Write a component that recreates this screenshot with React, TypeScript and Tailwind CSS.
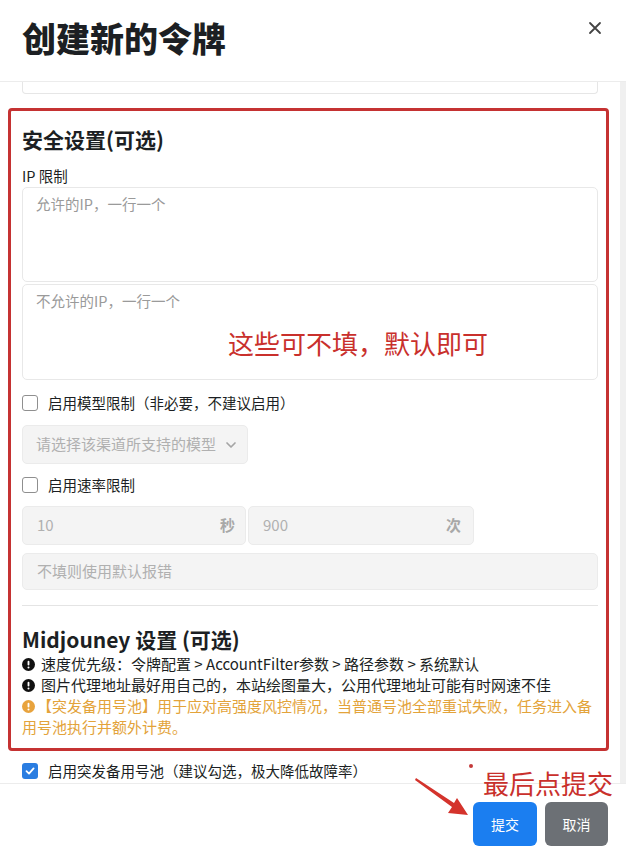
import React from 'react'

function Box({checked}: {checked?: boolean}) {
    return checked ? (
        <span className="w-[16px] h-[16px] rounded-[3px] bg-[#2a7de1] flex items-center justify-center">
            <svg width="12" height="12" viewBox="0 0 12 12"><path d="M2.5 6.2 L5 8.6 L9.6 3.4" stroke="#fff" strokeWidth="1.8" fill="none" strokeLinecap="round" strokeLinejoin="round"/></svg>
        </span>
    ) : (
        <span className="w-[16px] h-[16px] rounded-[3px] border border-[#8f8f8f] bg-white" />
    )
}

function Info({color}: {color: string}) {
    return (
        <svg width="13" height="13" viewBox="0 0 14 14" className="shrink-0 mt-[5px]">
            <circle cx="7" cy="7" r="7" fill={color} />
            <rect x="6" y="3" width="2" height="5" rx="1" fill="#fff" />
            <circle cx="7" cy="10.3" r="1.1" fill="#fff" />
        </svg>
    )
}

export default function App() {
    return (
        <div className="relative w-[626px] h-[859px] bg-white overflow-hidden text-[#1c1f23] font-['Microsoft_YaHei','Noto_Sans_CJK_SC',sans-serif]">
            {/* header */}
            <div className="h-[81px] flex justify-between pl-[22px] pr-[24px] pt-[16px]">
                <h1 className="text-[34px] font-black leading-[44px]">创建新的令牌</h1>
                <svg width="14" height="14" viewBox="0 0 14 14" className="mt-[5px]">
                    <path d="M2 2 L12 12 M12 2 L2 12" stroke="#444" strokeWidth="1.8" strokeLinecap="round" />
                </svg>
            </div>

            {/* body */}
            <div className="relative h-[703px] overflow-hidden border-t border-[#ececec] border-b flex">
                <div className="flex-1">
                    <div className="mx-[22px] h-[12px] border-x border-b border-[#e6e6e6] rounded-b-[4px]" />

                    <div className="mt-[14px] ml-[8px] mr-[11px] border-[3px] border-[#c53232] rounded-[4px] pl-[11px] pr-[8px] pt-[14px] pb-[11px] flex flex-col">
                        <h2 className="text-[21px] font-bold leading-[28px]">安全设置(可选)</h2>
                        <div className="text-[14.5px] leading-[20px] mt-[13px]">IP 限制</div>
                        <div className="mt-[1px] h-[95px] border border-[#e8e8e8] rounded-[5px] px-[13px] pt-[5px] text-[14.5px] text-[#9a9a9a]">允许的IP，一行一个</div>
                        <div className="mt-[2px] h-[96px] border border-[#e8e8e8] rounded-[5px] px-[13px] pt-[5px] text-[14.5px] text-[#9a9a9a]">不允许的IP，一行一个</div>

                        <label className="mt-[13px] flex items-center gap-[10px] text-[14.5px] leading-[20px]">
                            <Box />
                            <span>启用模型限制（非必要，不建议启用）</span>
                        </label>
                        <div className="mt-[12px] w-[226px] h-[39px] bg-[#f4f4f4] border border-[#ebebeb] rounded-[5px] flex items-center justify-between pl-[13px] pr-[9px] text-[15px] text-[#b0b0b0]">
                            <span>请选择该渠道所支持的模型</span>
                            <svg width="14" height="14" viewBox="0 0 14 14"><path d="M3 5 L7 9 L11 5" stroke="#a5a5a5" strokeWidth="1.7" fill="none" strokeLinecap="round" strokeLinejoin="round" /></svg>
                        </div>

                        <label className="mt-[11px] flex items-center gap-[10px] text-[14.5px] leading-[20px]">
                            <Box />
                            <span>启用速率限制</span>
                        </label>
                        <div className="mt-[11px] flex gap-[2px]">
                            <div className="w-[224px] h-[39px] bg-[#f4f4f4] border border-[#ebebeb] rounded-[5px] flex items-center justify-between pl-[14px] pr-[10px] text-[15px] text-[#b0b0b0]">
                                <span>10</span><span className="font-bold text-[#a8a8a8]">秒</span>
                            </div>
                            <div className="w-[226px] h-[39px] bg-[#f4f4f4] border border-[#ebebeb] rounded-[5px] flex items-center justify-between pl-[14px] pr-[12px] text-[15px] text-[#b0b0b0]">
                                <span>900</span><span className="font-bold text-[#a8a8a8]">次</span>
                            </div>
                        </div>
                        <div className="mt-[8px] h-[37px] bg-[#f4f4f4] border border-[#ebebeb] rounded-[5px] flex items-center pl-[14px] text-[15px] text-[#b0b0b0]">不填则使用默认报错</div>

                        <div className="mt-[15px] h-px bg-[#e4e4e4]" />

                        <h2 className="mt-[19px] text-[21px] font-semibold leading-[28px]">Midjouney 设置 (可选)</h2>
                        <div className="flex flex-col text-[15px] leading-[21px]">
                            <div className="flex gap-[6px]"><Info color="#111" /><span>速度优先级：令牌配置 &gt; AccountFilter参数 &gt; 路径参数 &gt; 系统默认</span></div>
                            <div className="flex gap-[6px]"><Info color="#111" /><span>图片代理地址最好用自己的，本站绘图量大，公用代理地址可能有时网速不佳</span></div>
                            <div className="text-[#e3a33a]">
                                <span className="inline-block align-[-1px] mr-[2px]"><Info color="#e8a33d" /></span>
                                【突发备用号池】用于应对高强度风控情况，当普通号池全部重试失败，任务进入备用号池执行并额外计费。
                            </div>
                        </div>
                    </div>

                    <label className="mt-[10px] ml-[22px] flex items-center gap-[10px] text-[14.5px] leading-[20px]">
                        <Box checked />
                        <span>启用突发备用号池（建议勾选，极大降低故障率）</span>
                    </label>
                </div>
                <div className="w-[6px] bg-[#f0f0f0]" />
            </div>

            {/* footer */}
            <div className="flex justify-end gap-[8px] pr-[18px] pt-[18px]">
                <button className="w-[64px] h-[44px] rounded-[6px] bg-[#1b7ef0] text-white text-[14px]">提交</button>
                <button className="w-[63px] h-[44px] rounded-[6px] bg-[#6c7075] text-white text-[14px]">取消</button>
            </div>

            {/* annotations */}
            <div className="absolute left-[228px] top-[326px] text-[26px] leading-[34px] text-[#c9302c] font-['Noto_Sans_CJK_SC',sans-serif]">这些可不填，默认即可</div>
            <div className="absolute left-[483px] top-[764px] text-[26px] leading-[38px] text-[#c9302c] font-['Noto_Sans_CJK_SC',sans-serif]">最后点提交</div>
            <svg className="absolute left-[414px] top-[776px]" width="56" height="42" viewBox="0 0 56 42">
                <path d="M2 2 L40 27 L43 22 L54 39 L34 37 L38 31 L1 4 Z" fill="#d4332c" />
            </svg>
            <span className="absolute left-[469px] top-[764px] w-[4px] h-[4px] rounded-full bg-[#c43a3a]" />
        </div>
    )
}
